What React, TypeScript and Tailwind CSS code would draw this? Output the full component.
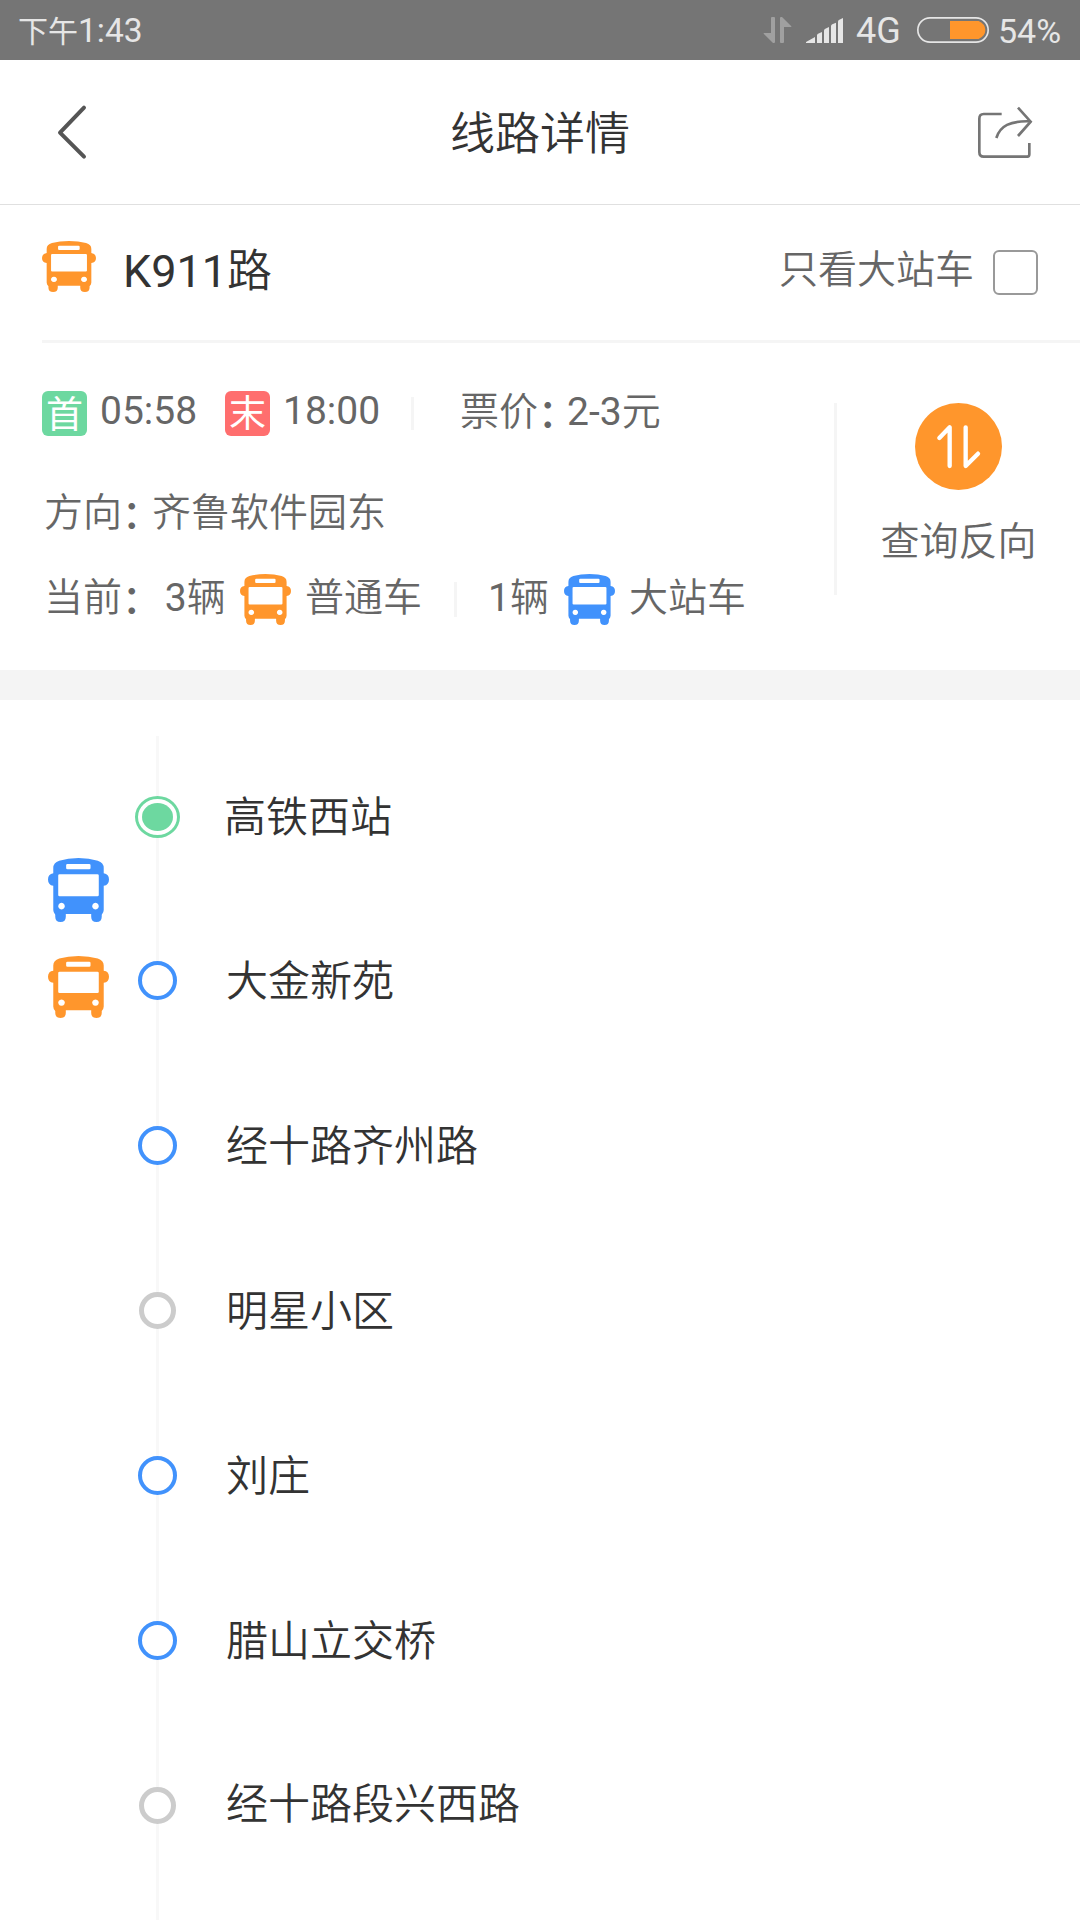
import React from 'react';

interface Station {
  name: string;
  state: 'start' | 'open' | 'idle';
}

const stations: Station[] = [
  { name: '高铁西站', state: 'start' },
  { name: '大金新苑', state: 'open' },
  { name: '经十路齐州路', state: 'open' },
  { name: '明星小区', state: 'idle' },
  { name: '刘庄', state: 'open' },
  { name: '腊山立交桥', state: 'open' },
  { name: '经十路段兴西路', state: 'idle' },
];

function BusIcon({ className }: { className: string }) {
  return (
    <svg viewBox="0 0 185 194" preserveAspectRatio="none" fill="currentColor" className={`block shrink-0 ${className}`}>
      <path
        fillRule="evenodd"
        d="M16 46V30Q16 14 34 8Q60 0 92.500 0T151 8Q169 14 169 30V46Q185 48 185 65T169 84V158Q169 166 163 172V178Q163 194 147 194T131 178V170H54V178Q54 194 38 194T22 178V172Q16 166 16 158V84Q0 82 0 65T16 46ZM59 18Q55 18 55 22V30Q55 34 59 34H125Q129 34 129 30V22Q129 18 125 18ZM35 49Q31 49 31 53V112Q31 116 35 116H150Q154 116 154 112V53Q154 49 150 49ZM41 136a10 10 0 1 0 .01 0ZM144 136a10 10 0 1 0 .01 0Z"
      />
    </svg>
  );
}

// Fullwidth colon, tightened and dropped to the baseline
function Colon() {
  return <span className="inline-block translate-y-[2px] font-medium tracking-[-9px] whitespace-nowrap">：</span>;
}

function StatusBar() {
  return (
    <div className="flex h-[60px] shrink-0 items-center bg-[#757575] pl-[18px] pr-[18px] leading-none text-[#e6e6e6]">
      <span className="flex-1 pt-[1px] text-[30px]">
        下午<span className="text-[33.500px]">1:43</span>
      </span>
      <svg viewBox="72 48 87 84" className="h-[28px] w-[29px]" fill="#a0a0a0">
        <path d="M96 54q0-3 3-3h6q3 0 3 3v72q0 3-3 3h-3L74 101v-2h22ZM123 54q0-3 3-3h3l28 28v2h-22v45q0 3-3 3h-6q-3 0-3-3Z" />
      </svg>
      <svg viewBox="198 48 117 84" className="ml-[13px] h-[28px] w-[39px]" fill="#e6e6e6">
        <path d="M201 126L228 111V129H201ZM234 106q0-3 3-5l12-5V129H234ZM255 92q0-4 4-6l11-5V129H255ZM276 79q0-4 4-6l11-5V129H276ZM297 65q0-4 4-6l11-5V129H297Z" />
      </svg>
      <span className="ml-[12px] w-[60px] pt-[2px] text-[36px]">4G</span>
      <svg viewBox="528 48 222 84" className="h-[28px] w-[74px]">
        <rect x="533.500" y="53.500" width="211" height="73" rx="36.500" fill="none" stroke="#e6e6e6" strokeWidth="5" />
        <path d="M630 63H716Q736 72 736 90T716 117H630Z" fill="#ff962c" />
      </svg>
      <span className="ml-[8px] w-[64px] pt-[2px] text-[34px] whitespace-nowrap">54%</span>
    </div>
  );
}

function Header() {
  return (
    <div className="flex h-[145px] shrink-0 items-center justify-between border-b border-[#e0e0e0] pl-[56px] pr-[47px]">
      <svg viewBox="168 312 96 168" className="h-[56px] w-[32px]" fill="none" stroke="#555" strokeWidth="12" strokeLinecap="round" strokeLinejoin="round">
        <path d="M252 323L180 398L252 470" />
      </svg>
      <h1 className="pt-[5px] pl-[16px] text-[45px] leading-none font-[350] text-[#333]">线路详情</h1>
      <svg viewBox="708 312 171 162" className="h-[54px] w-[57px]" fill="none" stroke="#757575" strokeWidth="8">
        <path d="M785 339H731Q718 339 718 353V453Q718 467 731 467H862Q868 467 868 460V426" />
        <path d="M769 411C780 375 810 359 870 361M834 320L872 362L834 405" />
      </svg>
    </div>
  );
}

function RouteBar() {
  return (
    <div className="ml-[42px] flex h-[138px] shrink-0 items-center border-b-[3px] border-[#f5f5f5] pr-[42px]">
      <BusIcon className="mb-[13px] h-[51px] w-[54px] text-[#ff962c]" />
      <span className="mb-[2px] ml-[27px] flex-1 text-[45px] leading-none text-[#333]">
        K911<span className="font-[350]">路</span>
      </span>
      <span className="mb-[4px] text-[39px] leading-none font-[350] text-[#666]">只看大站车</span>
      <span className="ml-[19px] h-[45px] w-[45px] rounded-[6px] border-2 border-[#999]"></span>
    </div>
  );
}

function RouteInfo() {
  return (
    <div className="flex h-[327px] shrink-0 text-[39px] leading-none font-[350] text-[#666]">
      <div className="w-[834px] pt-[48px] whitespace-nowrap">
        {/* First and last departure, fare */}
        <div className="flex h-[45px] items-center pl-[42px]">
          <span className="flex h-[45px] w-[45px] items-center justify-center rounded-[6px] bg-[#6dd8a0] pt-[4px] text-[37px] font-normal text-white">首</span>
          <span className="mb-[5px] w-[138px] pl-[13px] font-normal">05:58</span>
          <span className="flex h-[45px] w-[45px] items-center justify-center rounded-[6px] bg-[#ff6e6e] pt-[2px] text-[37px] font-normal text-white">末</span>
          <span className="mb-[5px] w-[141px] pl-[13px] font-normal">18:00</span>
          <span className="h-[33px] w-[3px] bg-[#f5f5f5]"></span>
          <span className="mb-[2px] pl-[46px]">票价<Colon /><span className="-ml-[1px] font-normal">2-3</span>元</span>
        </div>

        {/* Direction */}
        <div className="mt-[58px] flex h-[39px] items-center pl-[44px]">
          <span>方向<Colon />齐鲁软件园东</span>
        </div>

        {/* Vehicles on the road */}
        <div className="mt-[41px] flex h-[51px] items-center pl-[44px]">
          <span className="mb-[3px] w-[196px]">当前<Colon /><span className="ml-[3px] font-normal"> 3</span>辆</span>
          <BusIcon className="h-[51px] w-[51px] text-[#ff962c]" />
          <span className="mb-[3px] w-[163px] pl-[14px]">普通车</span>
          <span className="h-[35px] w-[3px] bg-[#f5f5f5]"></span>
          <span className="mb-[3px] w-[107px] pl-[31px]"><span className="font-normal">1</span>辆</span>
          <BusIcon className="h-[51px] w-[51px] text-[#4192fc]" />
          <span className="mb-[3px] pl-[14px]">大站车</span>
        </div>
      </div>

      <div className="mt-[60px] h-[192px] w-[3px] bg-[#f5f5f5]"></div>

      <div className="flex flex-1 flex-col items-center pt-[60px]">
        <svg viewBox="0 0 261 261" className="h-[87px] w-[87px]">
          <circle cx="130.500" cy="130.500" r="130.500" fill="#ff962c" />
          <path d="M73 105L104 73V189M152 73V189L189 152" fill="none" stroke="#fff" strokeWidth="13" strokeLinecap="round" strokeLinejoin="round" />
        </svg>
        <span className="mt-[33px]">查询反向</span>
      </div>
    </div>
  );
}

function StationNode({ state }: { state: Station['state'] }) {
  if (state === 'start') {
    return (
      <span className="flex h-[42px] w-[45px] items-center justify-center rounded-[50%] border-[3px] border-[#6dd8a0]">
        <span className="h-[28px] w-[31px] rounded-[50%] bg-[#6dd8a0]"></span>
      </span>
    );
  }
  return (
    <span
      className={`shrink-0 rounded-full ${
        state === 'open' ? 'h-[39px] w-[39px] border-[4px] border-[#4192fc]' : 'h-[37px] w-[37px] border-[5px] border-[#ccc]'
      }`}
    ></span>
  );
}

function StationList() {
  return (
    <div className="flex flex-1 overflow-hidden pt-[36px]">
      {/* Live bus positions */}
      <div className="flex w-[135px] flex-col gap-[34px] pl-[48px] pt-[122px]">
        <BusIcon className="h-[64px] w-[61px] text-[#4192fc]" />
        <BusIcon className="h-[62px] w-[61px] text-[#ff962c]" />
      </div>

      <div className="flex flex-1 flex-col">
        {stations.map((station) => (
          <div key={station.name} className={`group flex shrink-0 items-center ${station.state === 'start' ? 'h-[162px]' : 'h-[165px]'}`}>
            <div className="flex h-full w-[45px] flex-col items-center">
              <span className="w-[3px] flex-1 bg-[#f8f8f8]"></span>
              <StationNode state={station.state} />
              <span className="w-[3px] flex-1 bg-[#f8f8f8]"></span>
            </div>
            <span
              className={`pt-[2px] text-[42px] leading-none font-[350] text-[#333] group-nth-last-2:pt-0 group-nth-last-2:pb-[2px] ${
                station.state === 'start' ? 'ml-[44px]' : 'ml-[46px]'
              }`}
            >
              {station.name}
            </span>
          </div>
        ))}
        <div className="flex w-[45px] flex-1 justify-center">
          <span className="w-[3px] bg-[#f8f8f8]"></span>
        </div>
      </div>
    </div>
  );
}

export default function App() {
  return (
    <div className="flex h-[1920px] w-[1080px] flex-col overflow-hidden bg-white font-['Roboto','Noto_Sans_CJK_SC',sans-serif]">
      <StatusBar />
      <Header />
      <RouteBar />
      <RouteInfo />
      <div className="h-[30px] shrink-0 bg-[#f4f4f4]"></div>
      <StationList />
    </div>
  );
}
